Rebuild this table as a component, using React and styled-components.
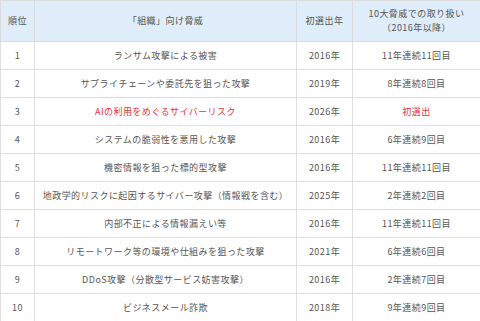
import React from "react";
import styled, { createGlobalStyle } from "styled-components";

const Global = createGlobalStyle`
  html, body { margin: 0; padding: 0; background: #fff; }
  body { font-family: "Noto Sans CJK JP", "Noto Sans", sans-serif; }
`;

const Table = styled.table`
  width: 480px;
  table-layout: fixed;
  border-collapse: collapse;
  border: 1px solid #dedede;
  color: #555;
  font-size: 9px;
  letter-spacing: 0.45px;
`;

const Col = styled.col`
  width: ${(p) => p.$w}px;
`;

const HeadRow = styled.tr`
  height: 41px;
  background: #deedf9;
`;

const BodyRow = styled.tr`
  height: 28px;
`;

const HeadCell = styled.th`
  font-weight: normal;
  text-align: center;
  vertical-align: middle;
  border: 1px solid #dcdcdc;
  padding: 0 2px;
  line-height: 14px;
`;

const Cell = styled.td`
  text-align: center;
  vertical-align: middle;
  border: 1px solid #dedede;
  padding: 0 1px;
  white-space: nowrap;
  color: ${(p) => (p.$hot ? "#e8333b" : "#555")};
`;

const rows = [
  ["1", "ランサム攻撃による被害", "2016年", "11年連続11回目"],
  ["2", "サプライチェーンや委託先を狙った攻撃", "2019年", "8年連続8回目"],
  ["3", "AIの利用をめぐるサイバーリスク", "2026年", "初選出", true],
  ["4", "システムの脆弱性を悪用した攻撃", "2016年", "6年連続9回目"],
  ["5", "機密情報を狙った標的型攻撃", "2016年", "11年連続11回目"],
  ["6", "地政学的リスクに起因するサイバー攻撃（情報戦を含む）", "2025年", "2年連続2回目"],
  ["7", "内部不正による情報漏えい等", "2016年", "11年連続11回目"],
  ["8", "リモートワーク等の環境や仕組みを狙った攻撃", "2021年", "6年連続6回目"],
  ["9", "DDoS攻撃（分散型サービス妨害攻撃）", "2016年", "2年連続7回目"],
  ["10", "ビジネスメール詐欺", "2018年", "9年連続9回目"],
];

export default function App() {
  return (
    <>
      <Global />
      <Table>
        <colgroup>
          <Col $w={34} />
          <Col $w={262} />
          <Col $w={56} />
          <Col $w={128} />
        </colgroup>
        <thead>
          <HeadRow>
            <HeadCell>順位</HeadCell>
            <HeadCell>「組織」向け脅威</HeadCell>
            <HeadCell>初選出年</HeadCell>
            <HeadCell>
              10大脅威での取り扱い
              <br />
              （2016年以降）
            </HeadCell>
          </HeadRow>
        </thead>
        <tbody>
          {rows.map(([rank, name, year, note, hot]) => (
            <BodyRow key={rank}>
              <Cell>{rank}</Cell>
              <Cell $hot={hot}>{name}</Cell>
              <Cell>{year}</Cell>
              <Cell $hot={hot}>{note}</Cell>
            </BodyRow>
          ))}
        </tbody>
      </Table>
    </>
  );
}
